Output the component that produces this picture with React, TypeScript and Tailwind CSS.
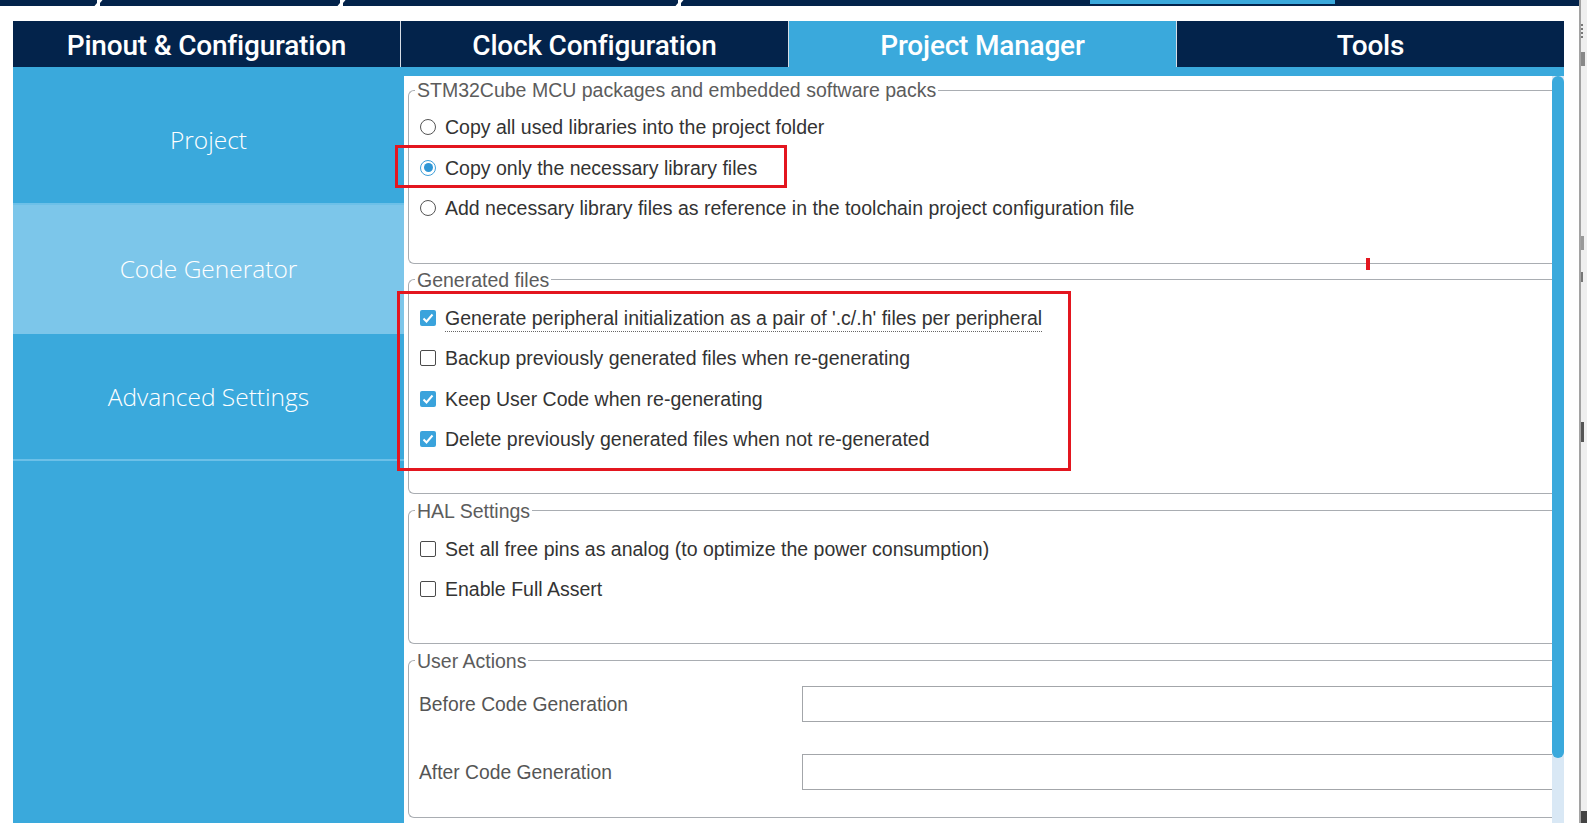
import React from "react";

const NAVY = "bg-[#03234b]";

function Radio({ checked }: { checked?: boolean }) {
  return checked ? (
    <span className="flex h-[16px] w-[16px] shrink-0 items-center justify-center rounded-full border border-[#3f9fd9] bg-white">
      <span className="h-[9px] w-[9px] rounded-full bg-[#2f97d6]" />
    </span>
  ) : (
    <span className="h-[16px] w-[16px] shrink-0 rounded-full border border-[#555] bg-white" />
  );
}

function Check({ checked }: { checked?: boolean }) {
  return checked ? (
    <span className="flex h-[16px] w-[16px] shrink-0 items-center justify-center rounded-[2px] bg-[#3aa3dc]">
      <svg width="14" height="14" viewBox="0 0 14 14">
        <polyline points="2.5,7.5 5.5,10.5 11.5,3.5" fill="none" stroke="white" strokeWidth="2" />
      </svg>
    </span>
  ) : (
    <span className="h-[16px] w-[16px] shrink-0 rounded-[2px] border-[1.5px] border-[#4a4a4a] bg-white" />
  );
}

function Row({ children }: { children: React.ReactNode }) {
  return <div className="flex h-[40.5px] items-center gap-[9px] pl-[11px]">{children}</div>;
}

function Label({ text, dotted }: { text: string; dotted?: boolean }) {
  return (
    <span
      className={
        "whitespace-nowrap text-[19.5px] leading-[22px] text-[#333] " +
        (dotted ? "border-b border-dotted border-[#666] pt-[3px] pb-[2px]" : "")
      }
    >
      {text}
    </span>
  );
}

function Group({
  legend,
  className,
  children,
}: {
  legend: string;
  className: string;
  children: React.ReactNode;
}) {
  return (
    <fieldset
      className={
        "ml-[4px] rounded-l-[6px] border border-r-0 border-[#a9adb2] " + className
      }
    >
      <legend className="ml-[6px] px-[2px] text-[19.5px] leading-[22px] text-[#5c5c5c]">
        {legend}
      </legend>
      {children}
    </fieldset>
  );
}

function Slash() {
  return <div className="h-[6px] w-[3px] shrink-0 -skew-x-[40deg] bg-white" />;
}

export default function App() {
  return (
    <div className="relative flex h-[823px] w-[1587px] overflow-hidden bg-white font-['Liberation_Sans',Arial,sans-serif]">
      <div className="flex w-[1579px] shrink-0 flex-col">
        {/* top strip */}
        <div className="flex h-[6px] shrink-0">
          <div className={"w-[97px] " + NAVY} />
          <Slash />
          <div className={"w-[240px] " + NAVY} />
          <Slash />
          <div className={"w-[335px] " + NAVY} />
          <Slash />
          <div className={"w-[409px] " + NAVY} />
          <div className="flex w-[245px] flex-col">
            <div className="h-[4px] bg-[#3aa9dc]" />
            <div className={"h-[2px] " + NAVY} />
          </div>
          <div className={"flex-1 " + NAVY} />
        </div>
        <div className="h-[15px] shrink-0" />
        <div className="flex min-h-0 flex-1 flex-col pl-[13px] pr-[15px]">
          {/* tabs */}
          <div className="flex h-[46px] shrink-0 text-[28px] text-white">
            {["Pinout & Configuration", "Clock Configuration", "Project Manager", "Tools"].map(
              (t, i) => (
                <div
                  key={t}
                  className={
                    "flex flex-1 items-center justify-center pt-[3px] " +
                    (i === 2 ? "bg-[#3aa9dc]" : NAVY) +
                    (i > 0 ? " border-l border-[#d7dde6]" : "")
                  }
                >
                  <span className="font-['Roboto',sans-serif] font-medium tracking-[-0.2px]">{t}</span>
                </div>
              )
            )}
          </div>
          <div className="h-[9px] shrink-0 bg-[#3aa9dc]" />
          {/* body */}
          <div className="flex min-h-0 flex-1">
            {/* sidebar */}
            <div className="flex w-[391px] shrink-0 flex-col bg-[#3aa9dc] font-['Open_Sans',sans-serif] text-[24.5px] font-light text-white">
              <div className="flex h-[127px] items-center justify-center pt-[2px]">Project</div>
              <div className="h-[2px] bg-[#6cc0e8]" />
              <div className="flex h-[129px] items-center justify-center bg-[#7cc6ea]">
                Code Generator
              </div>
              <div className="flex h-[125px] items-center justify-center pt-[2px]">Advanced Settings</div>
              <div className="h-[2px] bg-[#6cc0e8]" />
            </div>
            {/* content */}
            <div className="flex min-w-0 flex-1 flex-col pt-[3px]">
              <Group legend="STM32Cube MCU packages and embedded software packs" className="pt-[6px] pb-[34px]">
                <Row>
                  <Radio />
                  <Label text="Copy all used libraries into the project folder" />
                </Row>
                <Row>
                  <Radio checked />
                  <Label text="Copy only the necessary library files" />
                </Row>
                <Row>
                  <Radio />
                  <Label text="Add necessary library files as reference in the toolchain project configuration file" />
                </Row>
              </Group>
              <Group legend="Generated files" className="mt-[5px] pt-[7px] pb-[33px]">
                <Row>
                  <Check checked />
                  <Label dotted text="Generate peripheral initialization as a pair of '.c/.h' files per peripheral" />
                </Row>
                <Row>
                  <Check />
                  <Label text="Backup previously generated files when re-generating" />
                </Row>
                <Row>
                  <Check checked />
                  <Label text="Keep User Code when re-generating" />
                </Row>
                <Row>
                  <Check checked />
                  <Label text="Delete previously generated files when not re-generated" />
                </Row>
              </Group>
              <Group legend="HAL Settings" className="mt-[6px] pt-[7px] pb-[33px]">
                <Row>
                  <Check />
                  <Label text="Set all free pins as analog (to optimize the power consumption)" />
                </Row>
                <Row>
                  <Check />
                  <Label text="Enable Full Assert" />
                </Row>
              </Group>
              <Group legend="User Actions" className="mt-[6px] pt-[14px] pb-[27px]">
                <div className="flex h-[36px] items-center pl-[10px]">
                  <span className="w-[383px] shrink-0 pt-[4px] text-[19.3px] text-[#555]">Before Code Generation</span>
                  <div className="h-[36px] flex-1 border border-r-0 border-[#a3a6aa] bg-white" />
                </div>
                <div className="mt-[32px] flex h-[36px] items-center pl-[10px]">
                  <span className="w-[383px] shrink-0 pt-[4px] text-[19.3px] text-[#555]">After Code Generation</span>
                  <div className="h-[36px] flex-1 border border-r-0 border-[#a3a6aa] bg-white" />
                </div>
              </Group>
            </div>
            {/* scrollbar */}
            <div className="flex w-[12px] shrink-0 flex-col bg-[#d9e8f5]">
              <div className="h-[682px] rounded-full bg-[#3aa9dc]" />
            </div>
          </div>
        </div>
      </div>
      {/* right window edge (another window behind, clipped) */}
      <div className="flex flex-1 flex-col overflow-hidden border-l-2 border-[#a2a2a2] bg-[#efefef]">
        <div className="mt-[24px] h-[14px] border-l-2 border-dotted border-[#777]" />
        <div className="mt-[14px] h-[14px] w-[4px] bg-[#888]" />
        <div className="mt-[170px] h-[14px] w-[3px] bg-[#999]" />
        <div className="mt-[22px] h-[10px] w-[2px] bg-[#777]" />
        <div className="mt-[140px] h-[20px] w-[3px] bg-[#555]" />
        <div className="mt-auto h-[12px] bg-[#444]" />
      </div>
      {/* annotation overlays */}
      <div className="absolute left-[395px] top-[145px] h-[43px] w-[392px] border-[3px] border-[#e3161f]" />
      <div className="absolute left-[397px] top-[291px] h-[180px] w-[674px] border-[3px] border-[#e3161f]" />
      <div className="absolute left-[1366px] top-[258px] h-[12px] w-[4px] bg-[#e3161f]" />
    </div>
  );
}
